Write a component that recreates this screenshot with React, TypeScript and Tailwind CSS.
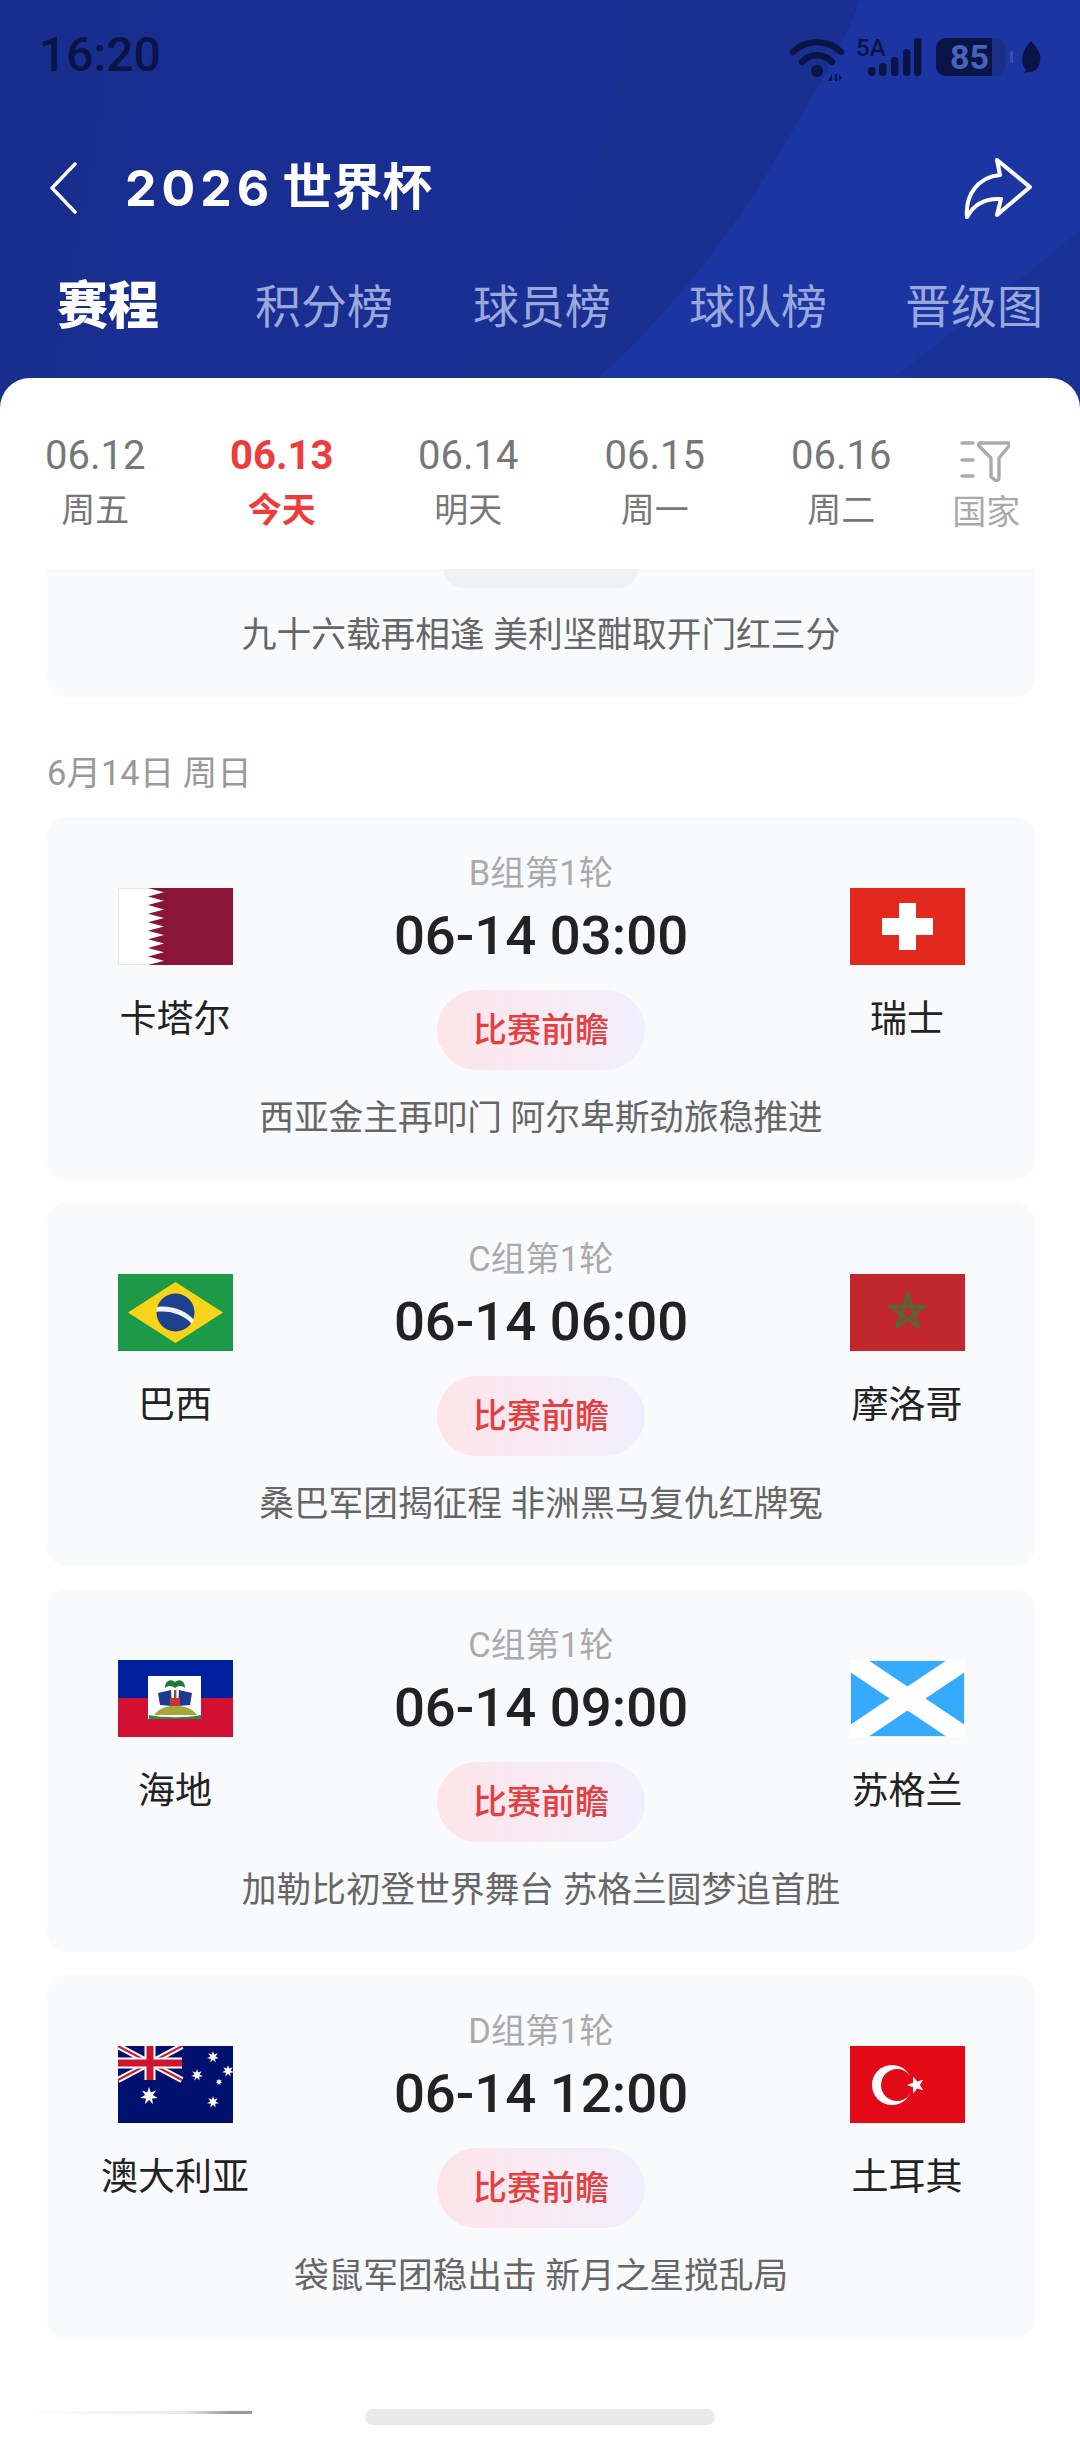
import React from 'react';

const FONT = "font-['Roboto','Noto_Sans_CJK_SC',sans-serif]";

const days = [
  { date: '06.12', label: '周五' },
  { date: '06.13', label: '今天', active: true },
  { date: '06.14', label: '明天' },
  { date: '06.15', label: '周一' },
  { date: '06.16', label: '周二' },
];

function starPoints(cx: number, cy: number, r: number, inner: number, n = 5, rot = -90) {
  const pts: string[] = [];
  for (let i = 0; i < n * 2; i++) {
    const rad = i % 2 === 0 ? r : inner;
    const a = ((rot + (i * 180) / n) * Math.PI) / 180;
    pts.push(`${(cx + rad * Math.cos(a)).toFixed(2)},${(cy + rad * Math.sin(a)).toFixed(2)}`);
  }
  return pts.join(' ');
}

function Qatar() {
  const h = 77 / 9;
  let d = 'M115 0 L46 0';
  for (let i = 0; i < 9; i++) {
    d += ` L30 ${(i * h + h / 2 - h / 2).toFixed(1)} L46 ${(i * h + h / 2).toFixed(1)}`;
  }
  d += ' L30 77 L115 77 Z';
  return (
    <svg width="115" height="77" viewBox="0 0 115 77">
      <rect x="0.5" y="0.5" width="114" height="76" fill="#fff" stroke="#e8e8ec" />
      <path d={d} fill="#8a1538" />
    </svg>
  );
}

function Swiss() {
  return (
    <svg width="115" height="77" viewBox="0 0 115 77">
      <rect width="115" height="77" fill="#e3291d" />
      <path d="M49 15h17v15h17v17H66v15H49V47H32V30h17z" fill="#fff" />
    </svg>
  );
}

function Brazil() {
  return (
    <svg width="115" height="77" viewBox="0 0 115 77">
      <rect width="115" height="77" fill="#1c9a48" />
      <path d="M57.5 8 L105 38.5 L57.5 69 L10 38.5 Z" fill="#f7d417" />
      <circle cx="57.5" cy="38.5" r="19" fill="#1f3f8f" />
      <path d="M39 33 C52 31 68 36 76 46 L74 50 C66 41 52 36 38 38 Z" fill="#eef2f2" />
    </svg>
  );
}

function Morocco() {
  return (
    <svg width="115" height="77" viewBox="0 0 115 77">
      <rect width="115" height="77" fill="#c1272d" />
      <polygon
        points={[0, 2, 4, 1, 3].map((i) => {
          const a = ((-90 + i * 72) * Math.PI) / 180;
          return `${(57.5 + 18 * Math.cos(a)).toFixed(1)},${(38 + 18 * Math.sin(a)).toFixed(1)}`;
        }).join(' ')}
        fill="none"
        stroke="#4d6a33"
        strokeWidth="3"
      />
    </svg>
  );
}

function Haiti() {
  return (
    <svg width="115" height="77" viewBox="0 0 115 77">
      <rect width="115" height="38" fill="#00209f" />
      <rect y="38" width="115" height="39" fill="#d21034" />
      <rect x="30" y="16" width="53" height="43" fill="#fff" />
      <path d="M56 30h2.400v16H56z" fill="#7a5a2a" />
      <path d="M57 22 C52 18 47 21 47 28 C51 25 54 26 57 28 C60 26 63 25 67 28 C67 21 62 18 57 22Z" fill="#1f7a3a" />
      <path d="M40 33 L53 30 L54 46 L42 45 Z" fill="#1d3a8f" />
      <path d="M74 33 L61 30 L60 46 L72 45 Z" fill="#1d3a8f" />
      <rect x="52" y="38" width="10" height="10" fill="#c8333a" />
      <path d="M36 55 C42 47 50 46 57 46 C65 46 73 47 79 55 Z" fill="#a3a83a" />
      <path d="M31 55 C45 58 69 58 83 55 L83 59 L31 59 Z" fill="#2e8b46" />
    </svg>
  );
}

function Scotland() {
  return (
    <svg width="115" height="77" viewBox="0 0 115 77">
      <rect x="0.5" y="0.5" width="114" height="76" fill="#35aaff" stroke="#eceef2" />
      <path d="M0 0 L115 77 M115 0 L0 77" stroke="#fff" strokeWidth="20" />
    </svg>
  );
}

function Australia() {
  const stars: [number, number, number][] = [
    [95, 11, 6],
    [79, 29, 6],
    [110, 25, 6],
    [101, 36, 3.5],
    [95, 56, 6],
  ];
  return (
    <svg width="115" height="77" viewBox="0 0 115 77">
      <rect width="115" height="77" fill="#00106e" />
      <path d="M0 0 L64 34 M64 0 L0 34" stroke="#fff" strokeWidth="6" />
      <path d="M0 0 L64 34 M64 0 L0 34" stroke="#d0152f" strokeWidth="2" />
      <path d="M32 0 V34 M0 17 H64" stroke="#fff" strokeWidth="11" />
      <path d="M32 0 V34 M0 17 H64" stroke="#d0152f" strokeWidth="7" />
      <polygon points={starPoints(31, 50, 9, 4, 7)} fill="#fff" />
      {stars.map(([x, y, r]) => (
        <polygon key={`${x}-${y}`} points={starPoints(x, y, r, r * 0.45, 7)} fill="#fff" />
      ))}
    </svg>
  );
}

function Turkey() {
  return (
    <svg width="115" height="77" viewBox="0 0 115 77">
      <rect width="115" height="77" fill="#e30a17" />
      <circle cx="42" cy="39" r="20" fill="#fff" />
      <circle cx="47" cy="39" r="16" fill="#e30a17" />
      <polygon points={starPoints(66, 39, 9, 3.8, 5, 180)} fill="#fff" />
    </svg>
  );
}

const matches = [
  { round: 'B组第1轮', time: '06-14 03:00', home: '卡塔尔', away: '瑞士', HomeFlag: Qatar, AwayFlag: Swiss, text: '西亚金主再叩门 阿尔卑斯劲旅稳推进' },
  { round: 'C组第1轮', time: '06-14 06:00', home: '巴西', away: '摩洛哥', HomeFlag: Brazil, AwayFlag: Morocco, text: '桑巴军团揭征程 非洲黑马复仇红牌冤' },
  { round: 'C组第1轮', time: '06-14 09:00', home: '海地', away: '苏格兰', HomeFlag: Haiti, AwayFlag: Scotland, text: '加勒比初登世界舞台 苏格兰圆梦追首胜' },
  { round: 'D组第1轮', time: '06-14 12:00', home: '澳大利亚', away: '土耳其', HomeFlag: Australia, AwayFlag: Turkey, text: '袋鼠军团稳出击 新月之星搅乱局' },
];

function Team({ name, Flag }: { name: string; Flag: () => React.ReactElement }) {
  return (
    <div className="flex w-[200px] flex-col items-center pt-[71px]">
      <Flag />
      <div className="mt-[32px] text-[37px] leading-[46px] text-[#222]">{name}</div>
    </div>
  );
}

function MatchCard({ m }: { m: (typeof matches)[number] }) {
  return (
    <div className="flex h-[363px] flex-col rounded-[20px] bg-[#f9fafc]">
      <div className="flex justify-between px-[28px]">
        <Team name={m.home} Flag={m.HomeFlag} />
        <div className="flex flex-col items-center pt-[34px]">
          <div className="text-[34.500px] leading-[44px] text-[#aaaaaa]">{m.round}</div>
          <div className="mt-[8px] text-[54.500px] font-medium leading-[64px] text-[#222]">{m.time}</div>
          <div className="mt-[23px] flex h-[80px] w-[208px] items-center justify-center rounded-full bg-[linear-gradient(90deg,#ffe4ea,#f0f0fd)] text-[34px] font-medium text-[#e5403f]">
            比赛前瞻
          </div>
        </div>
        <Team name={m.away} Flag={m.AwayFlag} />
      </div>
      <div className="mt-[25px] text-center text-[34.700px] leading-[46px] text-[#666]">{m.text}</div>
    </div>
  );
}

function StatusIcons() {
  return (
    <svg width="255" height="56" viewBox="0 -10 255 56" className="mr-[37px]">
      <g fill="none" stroke="#0a1446" strokeLinecap="round" strokeWidth="6.500">
        <path d="M5 14 C18 1 40 1 53 14" />
        <path d="M14 24 C22 15 36 15 44 24" />
      </g>
      <circle cx="29" cy="33" r="6" fill="#0a1446" />
      <path d="M40 43l4-7v7zM47 36h2v7h-2zM51 36l3 4-3 3z" fill="#0a1446" />
      <text x="68" y="18" fontFamily="Roboto" fontSize="24" fontWeight="500" fill="#0a1446">5A</text>
      {[
        [80, 29, 9],
        [91, 25, 13],
        [103, 19, 19],
        [115, 11, 27],
        [126, 0, 38],
      ].map(([x, y, h]) => (
        <rect key={x} x={x} y={y} width="7.500" height={h} rx="3.500" fill="#0a1446" />
      ))}
      <rect x="148" y="0" width="69" height="38" rx="10" fill="#1a2f85" />
      <path d="M158 0h46v38h-46a10 10 0 0 1-10-10V10a10 10 0 0 1 10-10z" fill="#0a1446" />
      <text x="162" y="31" fontFamily="Roboto" fontSize="34" fontWeight="700" fill="#4565b8">85</text>
      <rect x="222" y="13" width="3" height="12" rx="1.500" fill="#3652a8" />
      <path d="M243 3 C252 12 255 20 250 29 C248 33 244 34 240 34 L236 36 L238 32 C231 24 234 12 243 3Z" fill="#0a1446" />
    </svg>
  );
}

export default function App() {
  return (
    <div className={`relative h-[2444px] w-[1080px] overflow-hidden bg-white ${FONT}`}>
      <div className="relative h-[410px] overflow-hidden bg-[linear-gradient(100deg,#182e8e,#19309a)]">
        <svg width="1080" height="410" viewBox="0 0 1080 410" className="absolute left-0 top-0">
          <path d="M860 0 C810 140 660 300 490 410 H1080 V0Z" fill="#1b36a2" />
          <path d="M1080 230 C1010 290 930 350 850 410 H1080Z" fill="#193298" />
          <path d="M620 0 C640 120 560 280 420 410 H560 C700 300 790 150 860 0Z" fill="#1a3090" />
        </svg>
        <div className="relative flex h-[110px] items-start justify-between pl-[39px] pt-[28px]">
          <span className="mt-[2px] text-[48px] font-medium leading-[50px] text-[#0a1446]">16:20</span>
          <StatusIcons />
        </div>
        <div className="relative mt-[43px] flex h-[70px] items-center justify-between pl-[50px] pr-[48px] text-white">
          <div className="flex items-center">
            <svg width="27" height="52" viewBox="0 0 27 52" fill="none" stroke="#fff" strokeWidth="3.400" strokeLinecap="round" strokeLinejoin="round">
              <path d="M25 2 L2 26 L25 50" />
            </svg>
            <div className="ml-[48px] flex items-center text-[50px] font-bold leading-[60px]">
              <span className="font-['Inter'] tracking-[5px]">2026</span>
              <span className="ml-[8px]">世界杯</span>
            </div>
          </div>
          <svg width="68" height="62" viewBox="0 0 68 62" fill="none" stroke="#fff" strokeWidth="4" strokeLinejoin="round">
            <path d="M33 3 L66 30 L33 58 L37 42 C22 41 10 47 3 60 C1 38 14 20 36 18 Z" />
          </svg>
        </div>
        <div className="relative mt-[54px] flex h-[60px] items-center pl-[57px] text-[46px] leading-[60px] text-[#9aa8dc]">
          <span className="w-[198px] text-[51px] font-black text-white">赛程</span>
          <span className="w-[218px]">积分榜</span>
          <span className="w-[216px]">球员榜</span>
          <span className="w-[216px]">球队榜</span>
          <span>晋级图</span>
        </div>
      </div>

      <div className="absolute left-0 right-0 top-[378px] rounded-t-[30px] bg-white">
        <div className="flex h-[191px]">
          {days.map((d) => (
            <div key={d.date} className={`flex w-[186.500px] flex-col items-center pt-[53px] first:ml-[2px] ${d.active ? 'text-[#ee3b3b]' : 'text-[#777]'}`}>
              <span className={`text-[40px] leading-[50px] ${d.active ? 'font-bold' : ''}`}>{d.date}</span>
              <span className={`mt-[7px] text-[34px] leading-[44px] ${d.active ? 'font-bold' : ''}`}>{d.label}</span>
            </div>
          ))}
          <div className="flex flex-1 flex-col items-center pr-[42px] pt-[62px] text-[#aaaaaa]">
            <svg width="50" height="42" viewBox="0 0 50 42" fill="none" stroke="#aaaaaa" strokeWidth="3.400" strokeLinecap="round" strokeLinejoin="round" className="mr-[2px]">
              <path d="M2 3h11M2 20h11M2 36h11" />
              <path d="M20 3h28c1.500 0 2 1 1 3L39 18v20c0 2-2 3-4 2l-4-3V18L19 6c-1-2 0-3 1-3z" />
            </svg>
            <span className="mt-[10px] text-[34px] leading-[40px]">国家</span>
          </div>
        </div>

        <div className="pl-[47px] pr-[45px]">
          <div className="flex h-[128px] flex-col items-center rounded-b-[20px] bg-[#f9fafc]">
            <div className="h-[19px] w-[194px] rounded-b-[24px] bg-[#f0f1f3]" />
            <div className="mt-[24px] text-[34.700px] leading-[46px] text-[#666]">九十六载再相逢 美利坚酣取开门红三分</div>
          </div>
          <div className="mt-[54px] text-[34.500px] leading-[44px] text-[#999]">6月14日 周日</div>
          <div className="mt-[22px] flex flex-col gap-[23px]">
            {matches.map((m) => (
              <MatchCard key={m.time} m={m} />
            ))}
          </div>
        </div>
      </div>

      <div className="absolute left-[30px] top-[2411px] h-[3px] w-[222px] bg-[linear-gradient(90deg,transparent,#e8e8e8_70%,#999_90%)]" />
      <div className="absolute left-[365px] top-[2409px] h-[16px] w-[350px] rounded-[8px] bg-[#e9e9e9]" />
    </div>
  );
}
